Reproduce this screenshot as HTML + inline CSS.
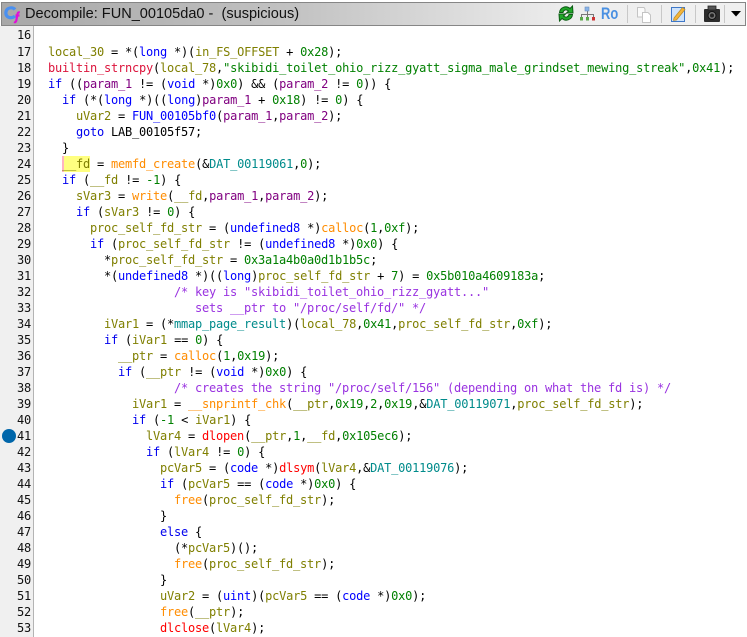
<!DOCTYPE html>
<html><head><meta charset="utf-8">
<style>
html,body{margin:0;padding:0;background:#fff;}
#r{position:relative;width:747px;height:637px;overflow:hidden;background:#fff;}
#tb{position:absolute;left:1px;top:2px;width:745px;height:24px;border:1px solid #868686;box-sizing:border-box;background:linear-gradient(90deg,#a8a8a8 0,#c2c2c2 290px,#eeeeee 570px,#f0f0f0 100%);}
#tl{position:absolute;left:25px;top:5px;font:14.55px/18px "Liberation Sans",sans-serif;color:#111;white-space:pre;}
#g{position:absolute;left:0;top:26px;width:33px;height:611px;background:#f0f0f0;border-right:1px solid #b4b4b4;}
.n,.l{position:absolute;font-family:"DejaVu Sans Mono",monospace;font-size:12px;letter-spacing:-.224px;line-height:16px;height:16px;white-space:pre;color:#000;}
.n{left:0;width:31px;text-align:right;color:#111;}
.l{left:48px;}
.v{color:#7f7f00}.k{color:#0000ee}.t{color:#0000ff}.f{color:#ff8c00}.r{color:#ff0000}.b{color:#dc143c}.p{color:#800080}.c{color:#008000}.g{color:#008b8b}.m{color:#9932e0}
#hy{position:absolute;left:64px;top:156px;width:26px;height:16px;background:#ffff80;}
#hp{position:absolute;left:62px;top:156px;width:2px;height:16px;background:#ffb4c0;}
#bp{position:absolute;left:2px;top:429px;width:14px;height:14px;border-radius:50%;background:#0066aa;}
svg{position:absolute;}
.sep{position:absolute;top:5px;width:1px;height:18px;background:#c8c8c8;}
</style></head><body><div id="r">
<div id="tb"></div>
<svg style="left:3px;top:5px" width="20" height="20" viewBox="0 0 20 20"><path d="M12 4.500C10.500 2.500 7 2.300 4.800 3.800C2.300 5.800 2.300 9.500 4.300 11.500C6.500 13.300 10 13 12 11" fill="none" stroke="#4a90f0" stroke-width="3.200"/><path d="M16.800 7.500C15 7 14.500 8 14.300 10L13.300 15.500C13 17 12 17.500 11 17M12.500 10.500H16.500" fill="none" stroke="#e010d8" stroke-width="2.200"/></svg>
<div id="tl">Decompile: FUN_00105da0 -  (suspicious)</div>

<svg style="left:557px;top:4px" width="18" height="19" viewBox="0 0 18 19"><path d="M2.500 8.500C3 3.500 9 1 13 4.500L15.500 2L16 9L9.500 9L11.500 7C9 5 6.500 6 6 8.500Z" fill="#22a82a" stroke="#0c5c14" stroke-width="1"/><path d="M15.500 10.500C15 15.500 9 18 5 14.500L2.500 17L2 10L8.500 10L6.500 12C9 14 11.500 13 12 10.500Z" fill="#22a82a" stroke="#0c5c14" stroke-width="1"/></svg>
<svg style="left:579px;top:6px" width="18" height="15" viewBox="0 0 18 15"><path d="M8.500 5V8.500M2.500 11V8.500H14.500V11M8.500 8.500V11" fill="none" stroke="#777" stroke-width="1"/><rect x="6" y="1" width="4" height="4" fill="#8ab4e8" stroke="#6a8fc0" stroke-width=".6"/><rect x="1" y="11" width="3" height="3.500" fill="#5aa84a"/><rect x="7" y="11" width="3" height="3.500" fill="#5aa84a"/><rect x="13" y="11" width="3" height="3.500" fill="#cc3333"/></svg>
<div style="position:absolute;left:601px;top:4px;font:bold 17px/20px 'Liberation Sans',sans-serif;color:#4a90e2;transform:scaleX(.76);transform-origin:0 0;">Ro</div>
<div class="sep" style="left:627px"></div>
<svg style="left:635px;top:5px" width="18" height="19" viewBox="0 0 18 19"><path d="M2.500 2.500H9L10 4V12H2.500Z" fill="#fafafa" stroke="#c4c4c4"/><path d="M7.500 7.500H13L15.500 10V17.500H7.500Z" fill="#fff" stroke="#c4c4c4"/></svg>
<div class="sep" style="left:661px"></div>
<svg style="left:670px;top:5px" width="17" height="18" viewBox="0 0 17 18"><rect x="1.500" y="2.500" width="13" height="14" fill="#cfe3fa" stroke="#3f78c8"/><path d="M4 13L12.500 2.500L15 4.500L6.500 15L3.500 15.500Z" fill="#f4b53a" stroke="#b98a2a" stroke-width=".7"/></svg>
<div class="sep" style="left:695px"></div>
<svg style="left:703px;top:5px" width="18" height="17" viewBox="0 0 18 17"><rect x="1" y="4" width="16" height="13" rx="1" fill="#2c2c2c"/><rect x="5" y="1" width="8" height="4" fill="#555" stroke="#222" stroke-width=".8"/><circle cx="9" cy="10.500" r="4" fill="#777" stroke="#111"/><circle cx="9" cy="10.500" r="2" fill="#222"/></svg>
<div class="sep" style="left:724px"></div>
<svg style="left:730px;top:10px" width="12" height="8" viewBox="0 0 12 8"><path d="M1 1H11L6 6.500Z" fill="#000"/></svg>

<div id="g"></div>
<div id="hy"></div><div id="hp"></div><div id="bp"></div>

<div class="n" style="top:27px">16</div>
<div class="n" style="top:44px">17</div><div class="l" style="top:44px"><span class="v">local_30</span> = *(<span class="t">long</span> *)(<span class="v">in_FS_OFFSET</span> + <span class="c">0x28</span>);</div>
<div class="n" style="top:60px">18</div><div class="l" style="top:60px"><span class="b">builtin_strncpy</span>(<span class="v">local_78</span>,<span class="c">"skibidi_toilet_ohio_rizz_gyatt_sigma_male_grindset_mewing_streak"</span>,<span class="c">0x41</span>);</div>
<div class="n" style="top:76px">19</div><div class="l" style="top:76px"><span class="k">if</span> ((<span class="p">param_1</span> != (<span class="t">void</span> *)<span class="c">0x0</span>) &amp;&amp; (<span class="p">param_2</span> != <span class="c">0</span>)) {</div>
<div class="n" style="top:92px">20</div><div class="l" style="top:92px">  <span class="k">if</span> (*(<span class="t">long</span> *)((<span class="t">long</span>)<span class="p">param_1</span> + <span class="c">0x18</span>) != <span class="c">0</span>) {</div>
<div class="n" style="top:108px">21</div><div class="l" style="top:108px">    <span class="v">uVar2</span> = <span class="t">FUN_00105bf0</span>(<span class="p">param_1</span>,<span class="p">param_2</span>);</div>
<div class="n" style="top:124px">22</div><div class="l" style="top:124px">    <span class="k">goto</span> LAB_00105f57;</div>
<div class="n" style="top:140px">23</div><div class="l" style="top:140px">  }</div>
<div class="n" style="top:156px">24</div><div class="l" style="top:156px">  <span class="v">__fd</span> = <span class="f">memfd_create</span>(&amp;<span class="g">DAT_00119061</span>,<span class="c">0</span>);</div>
<div class="n" style="top:172px">25</div><div class="l" style="top:172px">  <span class="k">if</span> (<span class="v">__fd</span> != <span class="c">-1</span>) {</div>
<div class="n" style="top:188px">26</div><div class="l" style="top:188px">    <span class="v">sVar3</span> = <span class="f">write</span>(<span class="v">__fd</span>,<span class="p">param_1</span>,<span class="p">param_2</span>);</div>
<div class="n" style="top:204px">27</div><div class="l" style="top:204px">    <span class="k">if</span> (<span class="v">sVar3</span> != <span class="c">0</span>) {</div>
<div class="n" style="top:220px">28</div><div class="l" style="top:220px">      <span class="v">proc_self_fd_str</span> = (<span class="t">undefined8</span> *)<span class="f">calloc</span>(<span class="c">1</span>,<span class="c">0xf</span>);</div>
<div class="n" style="top:236px">29</div><div class="l" style="top:236px">      <span class="k">if</span> (<span class="v">proc_self_fd_str</span> != (<span class="t">undefined8</span> *)<span class="c">0x0</span>) {</div>
<div class="n" style="top:252px">30</div><div class="l" style="top:252px">        *<span class="v">proc_self_fd_str</span> = <span class="c">0x3a1a4b0a0d1b1b5c</span>;</div>
<div class="n" style="top:268px">31</div><div class="l" style="top:268px">        *(<span class="t">undefined8</span> *)((<span class="t">long</span>)<span class="v">proc_self_fd_str</span> + <span class="c">7</span>) = <span class="c">0x5b010a4609183a</span>;</div>
<div class="n" style="top:284px">32</div><div class="l" style="top:284px"><span class="m">                  /* key is "skibidi_toilet_ohio_rizz_gyatt..."</span></div>
<div class="n" style="top:300px">33</div><div class="l" style="top:300px"><span class="m">                     sets __ptr to "/proc/self/fd/" */</span></div>
<div class="n" style="top:316px">34</div><div class="l" style="top:316px">        <span class="v">iVar1</span> = (*<span class="g">mmap_page_result</span>)(<span class="v">local_78</span>,<span class="c">0x41</span>,<span class="v">proc_self_fd_str</span>,<span class="c">0xf</span>);</div>
<div class="n" style="top:332px">35</div><div class="l" style="top:332px">        <span class="k">if</span> (<span class="v">iVar1</span> == <span class="c">0</span>) {</div>
<div class="n" style="top:348px">36</div><div class="l" style="top:348px">          <span class="v">__ptr</span> = <span class="f">calloc</span>(<span class="c">1</span>,<span class="c">0x19</span>);</div>
<div class="n" style="top:364px">37</div><div class="l" style="top:364px">          <span class="k">if</span> (<span class="v">__ptr</span> != (<span class="t">void</span> *)<span class="c">0x0</span>) {</div>
<div class="n" style="top:380px">38</div><div class="l" style="top:380px"><span class="m">                  /* creates the string "/proc/self/156" (depending on what the fd is) */</span></div>
<div class="n" style="top:396px">39</div><div class="l" style="top:396px">            <span class="v">iVar1</span> = <span class="f">__snprintf_chk</span>(<span class="v">__ptr</span>,<span class="c">0x19</span>,<span class="c">2</span>,<span class="c">0x19</span>,&amp;<span class="g">DAT_00119071</span>,<span class="v">proc_self_fd_str</span>);</div>
<div class="n" style="top:412px">40</div><div class="l" style="top:412px">            <span class="k">if</span> (<span class="c">-1</span> &lt; <span class="v">iVar1</span>) {</div>
<div class="n" style="top:428px">41</div><div class="l" style="top:428px">              <span class="v">lVar4</span> = <span class="r">dlopen</span>(<span class="v">__ptr</span>,<span class="c">1</span>,<span class="v">__fd</span>,<span class="c">0x105ec6</span>);</div>
<div class="n" style="top:444px">42</div><div class="l" style="top:444px">              <span class="k">if</span> (<span class="v">lVar4</span> != <span class="c">0</span>) {</div>
<div class="n" style="top:460px">43</div><div class="l" style="top:460px">                <span class="v">pcVar5</span> = (<span class="t">code</span> *)<span class="r">dlsym</span>(<span class="v">lVar4</span>,&amp;<span class="g">DAT_00119076</span>);</div>
<div class="n" style="top:476px">44</div><div class="l" style="top:476px">                <span class="k">if</span> (<span class="v">pcVar5</span> == (<span class="t">code</span> *)<span class="c">0x0</span>) {</div>
<div class="n" style="top:492px">45</div><div class="l" style="top:492px">                  <span class="f">free</span>(<span class="v">proc_self_fd_str</span>);</div>
<div class="n" style="top:508px">46</div><div class="l" style="top:508px">                }</div>
<div class="n" style="top:524px">47</div><div class="l" style="top:524px">                <span class="k">else</span> {</div>
<div class="n" style="top:540px">48</div><div class="l" style="top:540px">                  (*<span class="v">pcVar5</span>)();</div>
<div class="n" style="top:556px">49</div><div class="l" style="top:556px">                  <span class="f">free</span>(<span class="v">proc_self_fd_str</span>);</div>
<div class="n" style="top:572px">50</div><div class="l" style="top:572px">                }</div>
<div class="n" style="top:588px">51</div><div class="l" style="top:588px">                <span class="v">uVar2</span> = (<span class="t">uint</span>)(<span class="v">pcVar5</span> == (<span class="t">code</span> *)<span class="c">0x0</span>);</div>
<div class="n" style="top:604px">52</div><div class="l" style="top:604px">                <span class="f">free</span>(<span class="v">__ptr</span>);</div>
<div class="n" style="top:620px">53</div><div class="l" style="top:620px">                <span class="r">dlclose</span>(<span class="v">lVar4</span>);</div>
</div></body></html>
